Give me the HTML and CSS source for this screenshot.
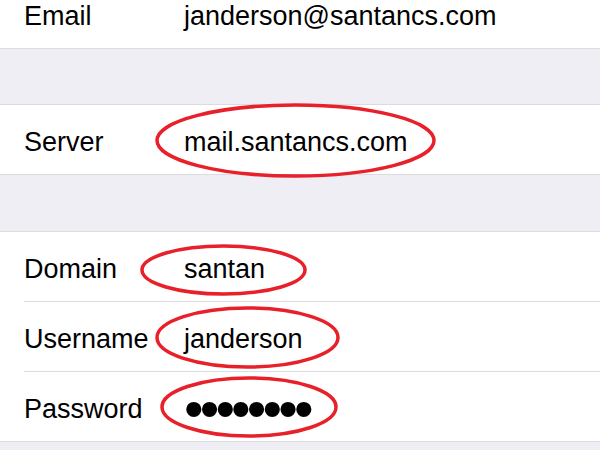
FILE: index.html
```html
<!DOCTYPE html>
<html>
<head>
<meta charset="utf-8">
<link rel="stylesheet" href="styles.css">
</head>
<body>
<div class="group first">
  <div class="row"><span class="label">Email</span><span class="value">janderson@santancs.com</span></div>
</div>
<div class="group gap-a">
  <div class="row"><span class="label">Server</span><span class="value">mail.santancs.com</span>
    <svg class="mark m-server" width="281" height="75" viewBox="0 0 281 75"><ellipse cx="140.5" cy="37.5" rx="138.5" ry="35.5"/></svg>
  </div>
</div>
<div class="group gap-b">
  <div class="row"><span class="label">Domain</span><span class="value">santan</span>
    <svg class="mark m-domain" width="167" height="52" viewBox="0 0 167 52"><ellipse cx="83.5" cy="26" rx="81.5" ry="24"/></svg>
  </div>
  <div class="row"><span class="label">Username</span><span class="value">janderson</span>
    <svg class="mark m-user" width="185" height="63" viewBox="0 0 185 63"><ellipse cx="92.5" cy="31.5" rx="90.5" ry="29.5"/></svg>
  </div>
  <div class="row"><span class="label">Password</span><span class="value dots">••••••••</span>
    <svg class="mark m-pass" width="178" height="62" viewBox="0 0 178 62"><ellipse cx="89" cy="31" rx="87" ry="29"/></svg>
  </div>
</div>
</body>
</html>
```
FILE: styles.css
```css
html, body {
  margin: 0;
  padding: 0;
}
body {
  background: #efeef4;
  font-family: "Liberation Sans", Arial, sans-serif;
  font-size: 27px;
  color: #000;
  overflow: hidden;
  height: 450px;
}
.group {
  background: #fff;
  border-top: 1px solid #dcdce0;
  border-bottom: 1px solid #dcdce0;
}
.group.first {
  margin-top: -22px;
}
.group.gap-a {
  margin-top: 55px;
}
.group.gap-b {
  margin-top: 56px;
}
.row {
  position: relative;
  box-sizing: border-box;
  height: 69px;
  padding-top: 5px;
  margin-left: 24px;
  display: flex;
  align-items: center;
}
.row + .row {
  border-top: 1px solid #dcdce0;
  height: 70px;
}
.label {
  width: 160px;
  flex: none;
}
.value {
  white-space: nowrap;
}
.dots {
  font-size: 56px;
  line-height: 1;
  letter-spacing: -3.9px;
  margin-left: 0;
}
.mark {
  position: absolute;
  overflow: visible;
  z-index: 2;
}
.mark ellipse {
  fill: none;
  stroke: #e8202a;
  stroke-width: 3.5;
}
.m-server { left: 131px; top: -2px; }
.m-domain { left: 116px; top: 12px; }
.m-user { left: 131px; top: 4px; }
.m-pass { left: 136px; top: 4px; }
```
